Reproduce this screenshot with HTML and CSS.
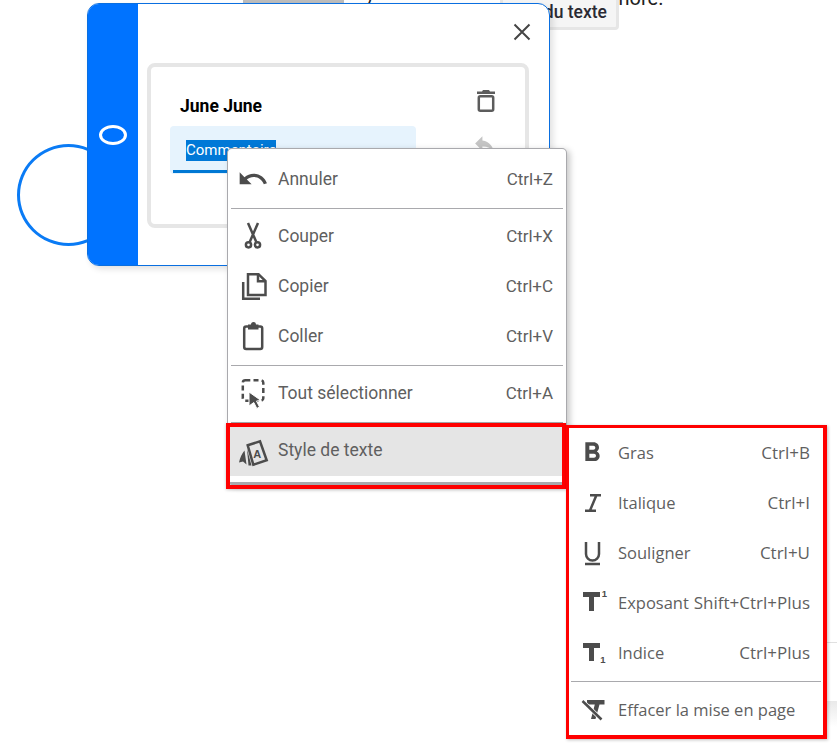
FILE: index.html
```html
<!DOCTYPE html>
<html lang="fr">
<head>
<meta charset="utf-8">
<title>Style de texte</title>
<link rel="stylesheet" href="styles.css">
</head>
<body>
<div class="canvas">
  <div class="bg-bar"></div>
  <div class="bg-paren">)</div>
  <div class="bg-text">more.</div>
  <div class="bg-button">du texte</div>
  <div class="bg-line"></div>
  <div class="bg-shade"></div>

  <div class="circle"></div>

  <section class="card">
    <div class="card-bar"><span class="oval"></span></div>
    <div class="card-body">
      <div class="card-head">
        <svg class="close" viewBox="0 0 18 18"><path d="M1.5 1.5 16.5 16.5M16.5 1.5 1.5 16.5"/></svg>
      </div>
      <div class="comment-box">
        <div class="comment-main">
          <div class="comment-name">June June</div>
          <div class="comment-field">
            <div class="field-text"><span class="selected">Commentaire</span></div>
            <div class="field-line"></div>
          </div>
        </div>
        <div class="comment-actions">
          <svg class="trash" viewBox="0 0 20 24"><path class="fill" d="M1 2.5H6L7 1H13L14 2.5H19V5H1Z"/><rect class="stroke" x="2.8" y="7.2" width="14.4" height="14.6" rx="1.5"/></svg>
          <svg class="reply" viewBox="0 0 24 24"><path d="M10 9V5l-7 7 7 7v-4.100c5 0 8.500 1.600 11 5.100-1-5-4-10-11-11z"/></svg>
        </div>
      </div>
    </div>
  </section>

  <nav class="menu main-menu">
    <div class="row">
      <svg class="ico" viewBox="0 0 24 24"><path class="fill" d="M12.500 8c-2.650 0-5.050.99-6.900 2.600L2 7v9h9l-3.620-3.620c1.390-1.160 3.160-1.880 5.120-1.880 3.540 0 6.550 2.310 7.600 5.500l2.370-.78C21.080 11.030 17.150 8 12.500 8z"/></svg>
      <span class="label">Annuler</span><span class="key">Ctrl+Z</span>
    </div>
    <div class="sep"></div>
    <div class="row">
      <svg class="ico" viewBox="0 0 32 32"><g class="line"><path d="M11 3 19.300 22M21 3 12.700 22"/><circle cx="11.500" cy="24.800" r="2.600"/><circle cx="20.500" cy="24.800" r="2.600"/></g></svg>
      <span class="label">Couper</span><span class="key">Ctrl+X</span>
    </div>
    <div class="row">
      <svg class="ico" viewBox="0 0 32 32"><g class="line"><path d="M6.200 12V28.800H23"/><path d="M11 4.200H21.500L28.500 11V25H11Z"/><path d="M21 4.200V11.200H28.500"/></g></svg>
      <span class="label">Copier</span><span class="key">Ctrl+C</span>
    </div>
    <div class="row">
      <svg class="ico" viewBox="0 0 32 32"><rect class="line" x="7.200" y="6.500" width="18" height="22.500" rx="2"/><path class="fill" d="M11 4.500H14A2.500 2.500 0 0 1 19 4.500H21.500V9.500H11Z"/></svg>
      <span class="label">Coller</span><span class="key">Ctrl+V</span>
    </div>
    <div class="sep"></div>
    <div class="row">
      <svg class="ico" viewBox="0 0 32 32"><rect class="dash" x="5.800" y="3.200" width="20.500" height="20.500" rx="2.500"/><path class="fill cursor" d="M12 15 24 23.500 19.500 24 22.500 30 19.800 31.500 16.800 25.500 12 29Z"/></svg>
      <span class="label">Tout sélectionner</span><span class="key">Ctrl+A</span>
    </div>
    <div class="sep sep-last"></div>
    <div class="row active">
      <svg class="ico" viewBox="0 0 32 32"><polygon class="line" points="10.700,9.300 23,5.300 29.700,24.300 16.300,28.700"/><text class="ico-a" x="20.200" y="22">A</text><path class="fill" d="M2 26.500C3 21.500 5 17.500 7.500 14.500L9.500 28.500 6 25.500ZM10 13 14.500 29.500H11.500Z"/></svg>
      <span class="label">Style de texte</span>
    </div>
  </nav>
  <div class="mark"></div>

  <nav class="menu sub-menu">
    <div class="row">
      <svg class="ico" viewBox="0 0 24 24"><path class="fill" d="M15.600 10.790c.97-.67 1.650-1.770 1.650-2.790 0-2.260-1.750-4-4-4H7v14h7.040c2.090 0 3.710-1.700 3.710-3.790 0-1.520-.86-2.820-2.150-3.420zM10 6.500h3c.83 0 1.500.67 1.500 1.500s-.67 1.500-1.500 1.500h-3v-3zm3.500 9H10v-3h3.500c.83 0 1.500.67 1.500 1.500s-.67 1.500-1.500 1.500z"/></svg>
      <span class="label">Gras</span><span class="key">Ctrl+B</span>
    </div>
    <div class="row">
      <svg class="ico" viewBox="0 0 32 32"><path class="line" d="M14 8.200H25M9 23.800H20M20.500 8 13.800 24"/></svg>
      <span class="label">Italique</span><span class="key">Ctrl+I</span>
    </div>
    <div class="row">
      <svg class="ico" viewBox="0 0 32 32"><path class="line" d="M10 5V17A6.500 6.500 0 0 0 23 17V5M9 27H24"/></svg>
      <span class="label">Souligner</span><span class="key">Ctrl+U</span>
    </div>
    <div class="row">
      <svg class="ico" viewBox="0 0 32 32"><path class="fill" d="M7 5H24V10H18V24H13V10H7Z"/><text class="ico-one" x="28.500" y="10">1</text></svg>
      <span class="label">Exposant</span><span class="key">Shift+Ctrl+Plus</span>
    </div>
    <div class="row">
      <svg class="ico" viewBox="0 0 32 32"><path class="fill" d="M7 6H24V11H18V24H13V11H7Z"/><text class="ico-one" x="27" y="26">1</text></svg>
      <span class="label">Indice</span><span class="key">Ctrl+Plus</span>
    </div>
    <div class="sep"></div>
    <div class="row">
      <svg class="ico" viewBox="0 0 32 32"><path class="fill" d="M11 6H28.500V10.500H23.500L19.500 25H15L18.800 10.500H11Z"/><path class="halo" d="M6.500 7 25.500 25.500"/><path class="line" d="M6.500 7 25.500 25.500"/></svg>
      <span class="label">Effacer la mise en page</span>
    </div>
  </nav>
</div>
</body>
</html>
```
FILE: styles.css
```css
* { box-sizing: border-box; }

html, body {
  margin: 0;
  padding: 0;
  background: #fff;
}

.canvas {
  position: relative;
  width: 837px;
  height: 745px;
  overflow: hidden;
  font-family: Roboto, "Liberation Sans", sans-serif;
}

/* Page behind the dialog */
.bg-bar {
  position: absolute;
  left: 243px;
  top: 0;
  width: 101px;
  height: 3px;
  background: #bdbdbd;
}

.bg-paren {
  position: absolute;
  left: 366px;
  top: -16px;
  font-size: 20px;
  line-height: 22px;
  color: #222;
}

.bg-text {
  position: absolute;
  left: 612px;
  top: -13px;
  font-size: 20px;
  line-height: 22px;
  color: #222;
}

.bg-button {
  position: absolute;
  left: 500px;
  top: -9px;
  width: 119px;
  height: 39px;
  padding: 7px 9px 0 0;
  text-align: right;
  font-size: 17.5px;
  font-weight: 500;
  line-height: 22px;
  color: #2a2a33;
  background: #f5f5f5;
  border: 3px solid #e6e6e6;
  border-radius: 4px;
}

.bg-line {
  position: absolute;
  left: 827px;
  top: 642px;
  width: 10px;
  height: 1px;
  background: #e0e0e0;
}

.bg-shade {
  position: absolute;
  left: 827px;
  top: 701px;
  width: 10px;
  height: 26px;
  background: linear-gradient(#e9e9e9, #fff);
}

/* Dialog */
.circle {
  position: absolute;
  left: 17px;
  top: 144px;
  width: 103px;
  height: 102px;
  border: 3px solid #0a7bf5;
  border-radius: 50%;
}

.card {
  position: absolute;
  left: 87px;
  top: 3px;
  width: 463px;
  height: 263px;
  display: flex;
  background: #fff;
  border: 1px solid #0a6fe0;
  border-radius: 12px;
  overflow: hidden;
  box-shadow: 3px 3px 6px rgba(0, 0, 0, 0.12);
}

.card-bar {
  flex: 0 0 50px;
  display: flex;
  align-items: center;
  justify-content: center;
  background: #0073ff;
}

.oval {
  width: 28px;
  height: 20px;
  border: 3px solid #fff;
  border-radius: 50%;
}

.card-body {
  flex: 1;
  padding: 0 20px 0 9px;
  display: flex;
  flex-direction: column;
}

.card-head {
  height: 59px;
  display: flex;
  justify-content: flex-end;
  padding: 19px 0 0 0;
}

.close {
  width: 18px;
  height: 18px;
  margin-right: -2px;
  fill: none;
  stroke: #454545;
  stroke-width: 2;
}

.comment-box {
  height: 165px;
  display: flex;
  padding: 0 0 0 19px;
  border: 4px solid #e6e6e6;
  border-radius: 8px;
}

.comment-main {
  width: 246px;
}

.comment-name {
  margin-top: 28px;
  padding-left: 10px;
  font-size: 17.5px;
  font-weight: 700;
  line-height: 22px;
  color: #000;
}

.comment-field {
  height: 48px;
  margin-top: 9px;
  padding-top: 14px;
  background: #e6f3fd;
  border-radius: 4px;
  display: flex;
  flex-direction: column;
  justify-content: space-between;
}

.field-text {
  padding-left: 16px;
  font-size: 15px;
  line-height: 21px;
  color: #fff;
}

.selected {
  display: inline-block;
  background: #0078d7;
}

.field-line {
  height: 3px;
  margin: 0 0 1px 3px;
  background: #0078d4;
}

.comment-actions {
  display: flex;
  flex-direction: column;
  margin-left: 60px;
  padding-top: 22px;
}

.trash {
  width: 20px;
  height: 24px;
}

.trash .fill { fill: #5c5c5c; }

.trash .stroke {
  fill: none;
  stroke: #5c5c5c;
  stroke-width: 2.5;
}

.reply {
  width: 25px;
  height: 25px;
  margin: 18px 0 0 -4px;
  fill: #c4c4c4;
}

/* Context menus */
.menu {
  position: absolute;
  background: #fff;
}

.main-menu {
  left: 227px;
  top: 148px;
  width: 340px;
  height: 337px;
  padding-top: 5px;
  border: 1px solid #a9a9ad;
  border-bottom-width: 3px;
  border-radius: 5px;
  box-shadow: 3px 2px 6px rgba(0, 0, 0, 0.22);
}

.row {
  display: flex;
  align-items: center;
  height: 50px;
  padding: 0 13px 0 9px;
  font-size: 17.5px;
  color: #5f5f5f;
}

.ico {
  flex: 0 0 32px;
  width: 32px;
  height: 32px;
}

.label {
  flex: 1;
  margin-left: 9px;
  white-space: nowrap;
}

.key {
  font-size: 17px;
  white-space: nowrap;
}

.fill { fill: #4c4c4c; }

.cursor {
  stroke: #fff;
  stroke-width: 1;
}

.line {
  fill: none;
  stroke: #4c4c4c;
  stroke-width: 2.5;
}

.halo {
  fill: none;
  stroke: #fff;
  stroke-width: 4;
}

.dash {
  fill: none;
  stroke: #4c4c4c;
  stroke-width: 2.5;
  stroke-dasharray: 5 3.200;
}

.ico-a {
  font-family: "Liberation Sans", sans-serif;
  font-size: 11px;
  font-weight: 700;
  text-anchor: middle;
  fill: #4c4c4c;
}

.ico-one {
  font-family: "Liberation Sans", sans-serif;
  font-size: 9.5px;
  font-weight: 700;
  text-anchor: middle;
  fill: #4c4c4c;
}

.sep {
  height: 1px;
  margin: 4px 3px 2px;
  background: #a9a9ad;
}

.sep-last {
  margin-bottom: 4px;
}

.active {
  background: #e5e5e5;
  height: 49px;
}

.active .label {
  margin-bottom: 4px;
}

.sub-menu {
  left: 566px;
  top: 425px;
  width: 261px;
  height: 314px;
  border-style: solid;
  border-color: #f00;
  border-width: 3px 4px 4px 3px;
  box-shadow: 1px 1px 3px rgba(0, 0, 0, 0.25);
}

.sub-menu .row {
  padding: 0 13px 0 7px;
  font-family: "Open Sans", "Noto Sans", sans-serif;
  font-size: 16.5px;
}

.sub-menu .label {
  margin-left: 10px;
  margin-bottom: 2px;
}

.sub-menu .key {
  margin-bottom: 2px;
}

.sub-menu .sep {
  margin: 3px 2px 3px;
}

/* Red annotation around the active row */
.mark {
  position: absolute;
  left: 226px;
  top: 423px;
  width: 340px;
  height: 66px;
  border: 4px solid #f00;
  box-shadow: 0 1px 3px rgba(0, 0, 0, 0.2);
  pointer-events: none;
}
```
